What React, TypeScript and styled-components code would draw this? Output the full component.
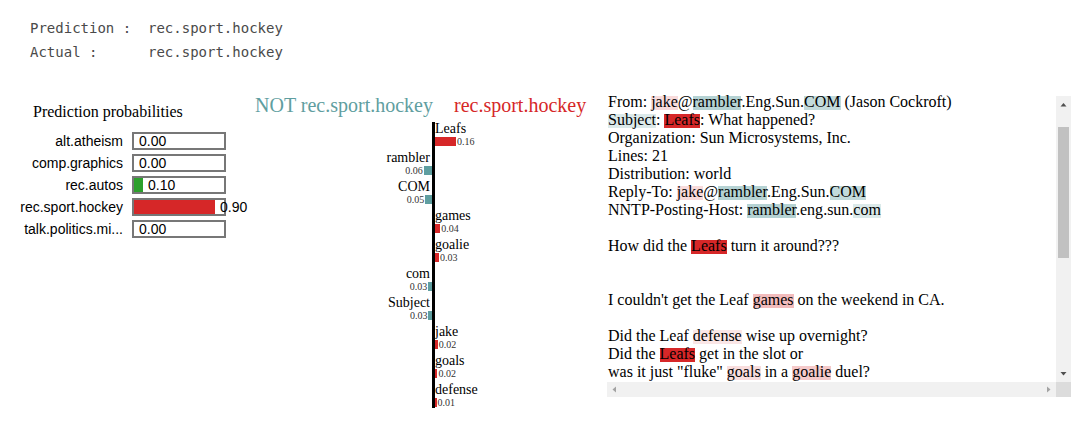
import React from "react";
import styled, { createGlobalStyle } from "styled-components";

const GlobalStyle = createGlobalStyle`
  html, body {
    margin: 0;
    padding: 0;
    background: #ffffff;
  }
  body {
    font-family: "Liberation Serif", serif;
    color: #000000;
  }
`;

const RED = "#d62728";
const TEAL = "#5f9ea0";
const GREEN = "#2ca02c";

type Proba = { label: string; value: number; color: string };

const probabilities: Proba[] = [
  { label: "alt.atheism", value: 0.0, color: "#1f77b4" },
  { label: "comp.graphics", value: 0.0, color: "#ff7f0e" },
  { label: "rec.autos", value: 0.1, color: GREEN },
  { label: "rec.sport.hockey", value: 0.9, color: RED },
  { label: "talk.politics.mi...", value: 0.0, color: "#9467bd" },
];

type Feature = { name: string; weight: number };

const features: Feature[] = [
  { name: "Leafs", weight: 0.158 },
  { name: "rambler", weight: -0.062 },
  { name: "COM", weight: -0.05 },
  { name: "games", weight: 0.04 },
  { name: "goalie", weight: 0.031 },
  { name: "com", weight: -0.028 },
  { name: "Subject", weight: -0.027 },
  { name: "jake", weight: 0.02 },
  { name: "goals", weight: 0.018 },
  { name: "defense", weight: 0.012 },
];

const maxWeight = Math.max(...features.map((f) => Math.abs(f.weight)));
const BAR_SCALE = 21 / maxWeight;
const PROBA_WIDTH = 90;

const weightOf: Record<string, number> = Object.fromEntries(
  features.map((f) => [f.name, f.weight])
);

const documentLines = [
  "From: jake@rambler.Eng.Sun.COM (Jason Cockroft)",
  "Subject: Leafs: What happened?",
  "Organization: Sun Microsystems, Inc.",
  "Lines: 21",
  "Distribution: world",
  "Reply-To: jake@rambler.Eng.Sun.COM",
  "NNTP-Posting-Host: rambler.eng.sun.com",
  "",
  "How did the Leafs turn it around???",
  "",
  "",
  "I couldn't get the Leaf games on the weekend in CA.",
  "",
  "Did the Leaf defense wise up overnight?",
  "Did the Leafs get in the slot or",
  'was it just "fluke" goals in a goalie duel?',
];

function highlightColor(weight: number): string {
  const alpha = Math.min(1, (Math.abs(weight) / maxWeight) * 1.1 + 0.03);
  return weight > 0
    ? `rgba(214, 39, 40, ${alpha.toFixed(3)})`
    : `rgba(95, 158, 160, ${alpha.toFixed(3)})`;
}

/* ---------- notebook output text ---------- */

const Page = styled.div`
  padding-top: 16px;
  width: 1074px;
`;

const Output = styled.pre`
  margin: 0;
  padding-left: 30px;
  font-family: "DejaVu Sans Mono", monospace;
  font-size: 14px;
  line-height: 24px;
  color: #4a4a4a;
`;

/* ---------- explanation layout ---------- */

const Explanation = styled.section`
  display: flex;
  align-items: flex-start;
  margin-top: 29px;
`;

/* prediction probabilities */

const ProbaPanel = styled.div`
  flex: none;
  width: 240px;
  padding-top: 10px;
`;

const ProbaTitle = styled.div`
  padding-left: 33px;
  font: 16px/18px "Liberation Serif", serif;
  white-space: nowrap;
`;

const ProbaList = styled.div`
  margin-top: 11px;
  display: grid;
  grid-template-columns: 123px 94px;
  column-gap: 9px;
  row-gap: 4px;
`;

const ProbaLabel = styled.div`
  font: 14px/18px "Liberation Sans", Arial, sans-serif;
  text-align: right;
  white-space: nowrap;
`;

const ProbaBox = styled.div`
  box-sizing: border-box;
  height: 18px;
  border: 2px solid #777777;
  display: flex;
  align-items: center;
`;

const ProbaFill = styled.div<{ $color: string }>`
  flex: none;
  height: 100%;
  background: ${(p) => p.$color};
`;

const ProbaValue = styled.span`
  margin-left: 5px;
  font: 14px/14px "Liberation Sans", Arial, sans-serif;
  white-space: nowrap;
`;

/* feature weights chart */

const ChartPanel = styled.div`
  flex: none;
  width: 367px;
  padding-top: 1px;
`;

const Titles = styled.div`
  display: grid;
  grid-template-columns: 192px 3px 1fr;
  height: 22px;
  margin-bottom: 6px;
  font: 20px/22px "Liberation Serif", serif;
  white-space: nowrap;
`;

const NegTitle = styled.div`
  grid-column: 1;
  margin-right: -1px;
  text-align: right;
  color: ${TEAL};
`;

const PosTitle = styled.div`
  grid-column: 3;
  padding-left: 19px;
  color: ${RED};
`;

const FeatureRow = styled.div`
  display: grid;
  grid-template-columns: 192px 3px 1fr;
  height: 29px;
`;

const Axis = styled.div`
  background: #000000;
  ${FeatureRow}:first-of-type > & {
    margin-top: 2px;
  }
  ${FeatureRow}:last-of-type > & {
    margin-bottom: 4px;
  }
`;

const Side = styled.div<{ $neg: boolean }>`
  display: flex;
  flex-direction: column;
  align-items: ${(p) => (p.$neg ? "flex-end" : "flex-start")};
`;

const FeatureName = styled.div<{ $neg: boolean }>`
  font: 14px/14px "Liberation Serif", serif;
  white-space: nowrap;
  margin-right: ${(p) => (p.$neg ? "2px" : "0")};
`;

const BarLine = styled.div<{ $neg: boolean }>`
  display: flex;
  flex-direction: ${(p) => (p.$neg ? "row-reverse" : "row")};
  align-items: center;
  gap: 1px;
  height: 9px;
  margin-top: 1px;
`;

const Bar = styled.div<{ $color: string }>`
  flex: none;
  height: 9px;
  background: ${(p) => p.$color};
`;

const BarValue = styled.span`
  font: 10px/9px "Liberation Serif", serif;
  color: #333333;
  white-space: nowrap;
`;

/* highlighted document */

const TextPanel = styled.div`
  flex: none;
  width: 464px;
  height: 304px;
  display: grid;
  grid-template-columns: 449px 15px;
  grid-template-rows: 289px 15px;
`;

const Viewport = styled.div`
  overflow: hidden;
`;

const Doc = styled.div`
  padding-left: 1px;
  font: 16px/18px "Liberation Serif", serif;
  white-space: pre;
  color: #000000;
`;

const DocLine = styled.div`
  height: 18px;
`;

const Mark = styled.span<{ $bg: string }>`
  background: linear-gradient(${(p) => p.$bg}, ${(p) => p.$bg}) 0 3px / 100% 14px
    no-repeat;
`;

const VTrack = styled.div`
  margin-top: 3px;
  display: flex;
  flex-direction: column;
  background: #f1f1f1;
`;

const HTrack = styled.div`
  display: flex;
  justify-content: space-between;
  background: #f1f1f1;
`;

const ScrollButton = styled.div`
  flex: none;
  width: 15px;
  height: 15px;
  display: flex;
`;

const ThumbSlot = styled.div`
  flex: 1;
  padding: 16px 2px 0;
`;

const Thumb = styled.div`
  height: 131px;
  background: #c1c1c1;
`;

const Corner = styled.div`
  background: #dcdcdc;
`;

function Arrow({ points, color }: { points: string; color: string }) {
  return (
    <svg width="15" height="15" viewBox="0 0 15 15">
      <polygon points={points} fill={color} />
    </svg>
  );
}

function renderLine(line: string) {
  const parts = line.split(/(\w+)/);
  return parts.map((part, i) => {
    const w = weightOf[part];
    if (w !== undefined) {
      return (
        <Mark key={i} $bg={highlightColor(w)}>
          {part}
        </Mark>
      );
    }
    return <React.Fragment key={i}>{part}</React.Fragment>;
  });
}

export default function App() {
  return (
    <>
      <GlobalStyle />
      <Page>
        <Output>
          {"Prediction :  rec.sport.hockey\nActual :      rec.sport.hockey"}
        </Output>

        <Explanation>
          <ProbaPanel>
            <ProbaTitle>Prediction probabilities</ProbaTitle>
            <ProbaList>
              {probabilities.map((p) => (
                <React.Fragment key={p.label}>
                  <ProbaLabel>{p.label}</ProbaLabel>
                  <ProbaBox>
                    <ProbaFill
                      $color={p.color}
                      style={{ width: `${p.value * PROBA_WIDTH}px` }}
                    />
                    <ProbaValue>{p.value.toFixed(2)}</ProbaValue>
                  </ProbaBox>
                </React.Fragment>
              ))}
            </ProbaList>
          </ProbaPanel>

          <ChartPanel>
            <Titles>
              <NegTitle>NOT rec.sport.hockey</NegTitle>
              <PosTitle>rec.sport.hockey</PosTitle>
            </Titles>
            {features.map((f) => {
              const neg = f.weight < 0;
              const cell = (
                <Side $neg={neg}>
                  <FeatureName $neg={neg}>{f.name}</FeatureName>
                  <BarLine $neg={neg}>
                    <Bar
                      $color={neg ? TEAL : RED}
                      style={{ width: `${Math.abs(f.weight) * BAR_SCALE}px` }}
                    />
                    <BarValue>{Math.abs(f.weight).toFixed(2)}</BarValue>
                  </BarLine>
                </Side>
              );
              return (
                <FeatureRow key={f.name}>
                  {neg ? cell : <div />}
                  <Axis />
                  {neg ? <div /> : cell}
                </FeatureRow>
              );
            })}
          </ChartPanel>

          <TextPanel>
            <Viewport>
              <Doc>
                {documentLines.map((line, i) => (
                  <DocLine key={i}>{renderLine(line)}</DocLine>
                ))}
              </Doc>
            </Viewport>
            <VTrack>
              <ScrollButton>
                <Arrow points="4.5,10.5 10.5,10.5 7.5,7" color="#505050" />
              </ScrollButton>
              <ThumbSlot>
                <Thumb />
              </ThumbSlot>
              <ScrollButton>
                <Arrow points="4.5,5 10.5,5 7.5,8.5" color="#505050" />
              </ScrollButton>
            </VTrack>
            <HTrack>
              <ScrollButton>
                <Arrow points="9,4.5 9,10.5 5.5,7.5" color="#a3a3a3" />
              </ScrollButton>
              <ScrollButton>
                <Arrow points="6,4.5 6,10.5 9.5,7.5" color="#a3a3a3" />
              </ScrollButton>
            </HTrack>
            <Corner />
          </TextPanel>
        </Explanation>
      </Page>
    </>
  );
}
